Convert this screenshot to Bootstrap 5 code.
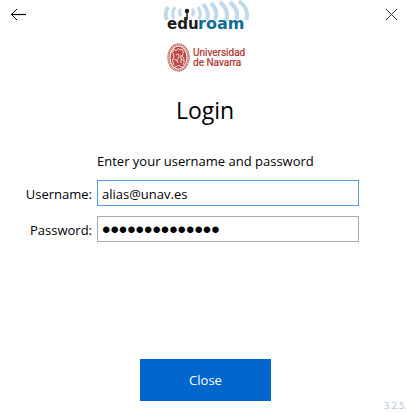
<!DOCTYPE html>
<html lang="en">
<head>
<meta charset="utf-8">
<meta name="viewport" content="width=device-width, initial-scale=1">
<title>eduroam - Login</title>
<link rel="stylesheet" href="https://cdn.jsdelivr.net/npm/bootstrap@5.3.0/dist/css/bootstrap.min.css">
<style>
body { font-family: "Open Sans", "Noto Sans", sans-serif; font-size: 13px; line-height: 20px; color: #000; }
.icon-btn { line-height: 0; color: #000; padding: 6px 10px; }
.icon-btn.close-x { padding: 8px 8px; color: #333; }
.logos svg { display: block; }
h1 { font-size: 23px; line-height: 32px; margin: 18px 0 0 4px; }
.intro { padding-left: 97px; margin: 25px 0 9px; }
.fields { padding-right: 47px; gap: 10px; }
.field-label { width: 92px; margin-right: 5px; padding-top: 2px; text-align: right; white-space: nowrap; flex: none; }
.field { border-radius: 0; border: 1px solid #abadb3; padding: 4px 4px 2px; font-size: 13px; line-height: 18px; min-height: 0; height: 26px; color: #000; }
.field.active, .field:focus { border-color: #569de5; box-shadow: none; color: #000; }
.field[type="password"] { font-family: "Liberation Sans", Arial, sans-serif; font-size: 24px; }
.close-btn { background: #0066cc; color: #fff; border: 0; border-radius: 0; width: 131px; height: 42px; padding: 8px 0 6px; font-size: 13px; margin-left: 5px; }
.close-btn:hover { background: #0058b0; color: #fff; }
.version { font: 8px/12px "DejaVu Sans", sans-serif; color: #b0c4de; padding-left: 384px; white-space: nowrap; }
</style>
</head>
<body>
<main class="d-flex flex-column min-vh-100 overflow-hidden">
  <header class="d-flex justify-content-between align-items-start">
    <button type="button" class="btn border-0 icon-btn" aria-label="Back">
      <svg width="17" height="17" viewBox="0 0 17 17" fill="none" stroke="currentColor"><path d="M1 8.500H16" stroke-width="1.200"/><path d="M7 3L1.500 8.500L7 14" stroke-width="1"/></svg>
    </button>
    <div class="logos d-flex flex-column align-items-center">
      <svg width="90" height="36" viewBox="162 0 90 36" role="img" aria-label="eduroam">
        <g fill="none" stroke="#bfd9ec" stroke-width="4">
          <path d="M168 7Q164 13 167 20"/>
          <path d="M175 7Q171 13 174 19" stroke-width="3"/>
          <path d="M181 9Q178 12 181 16" stroke-width="3"/>
          <path d="M192 9Q195 12 192 16" stroke-width="3"/>
          <path d="M198 7Q202 13 199 19" stroke-width="3"/>
          <path d="M203 4Q210 12 207 20"/>
          <path d="M211 3Q219 11 215 20"/>
          <path d="M220 2Q230 11 226 21"/>
          <path d="M230 2Q240 11 236 20"/>
          <path d="M239 1Q250 10 246 20"/>
        </g>
        <circle cx="187" cy="11" r="2.200" fill="#1b1b1b"/>
        <path d="M187 12V20" stroke="#1b1b1b" stroke-width="1.500"/>
        <g font-family="DejaVu Sans, sans-serif" font-weight="700">
          <text x="167" y="29" font-size="15" fill="#1b1b1b">edu</text>
          <text x="198" y="29" font-size="16" fill="#0f6c93">roam</text>
        </g>
      </svg>
      <svg width="90" height="40" viewBox="162 36 90 40" role="img" aria-label="Universidad de Navarra">
        <ellipse cx="178.500" cy="57.500" rx="10" ry="13" fill="#fff" stroke="#c8716c" stroke-width="2.500" stroke-dasharray="1.500 .5"/>
        <ellipse cx="178.500" cy="57.500" rx="8" ry="11" fill="#bb4a44"/>
        <g fill="none" stroke="#f3dcd9" stroke-width="1">
          <path d="M174 65Q171 60 174 56Q171 52 174 49L176 51Q178 47 180 50L182 49Q185 52 182 56Q186 60 183 65"/>
          <path d="M176 55Q179 52 179 57Q176 59 178 63M181 55V63M174 59L177 61M181 59L184 61M175 67Q179 64 182 67"/>
        </g>
        <g font-family="Roboto, sans-serif" font-size="10" fill="#b0302b" stroke="#b0302b" stroke-width=".2">
          <text x="193" y="56">Universidad</text>
          <text x="193" y="66">de Navarra</text>
        </g>
      </svg>
    </div>
    <button type="button" class="btn border-0 icon-btn close-x" aria-label="Close window">
      <svg width="13" height="13" viewBox="0 0 13 13" fill="none" stroke="currentColor"><path d="M1 1L12 12M12 1L1 12"/></svg>
    </button>
  </header>
  <h1 class="text-center fw-normal">Login</h1>
  <p class="intro">Enter your username and password</p>
  <form class="fields d-flex flex-column">
    <div class="d-flex align-items-center">
      <label class="field-label" for="user">Username:</label>
      <input class="form-control field active" id="user" type="text" value="alias@unav.es">
    </div>
    <div class="d-flex align-items-center">
      <label class="field-label" for="pass">Password:</label>
      <input class="form-control field" id="pass" type="password" value="12345678901234">
    </div>
  </form>
  <footer class="mt-auto">
    <div class="text-center"><button type="button" class="btn close-btn">Close</button></div>
    <div class="version">3.2.5.1</div>
  </footer>
</main>
<script src="https://cdn.jsdelivr.net/npm/bootstrap@5.3.0/dist/js/bootstrap.bundle.min.js"></script>
</body>
</html>
